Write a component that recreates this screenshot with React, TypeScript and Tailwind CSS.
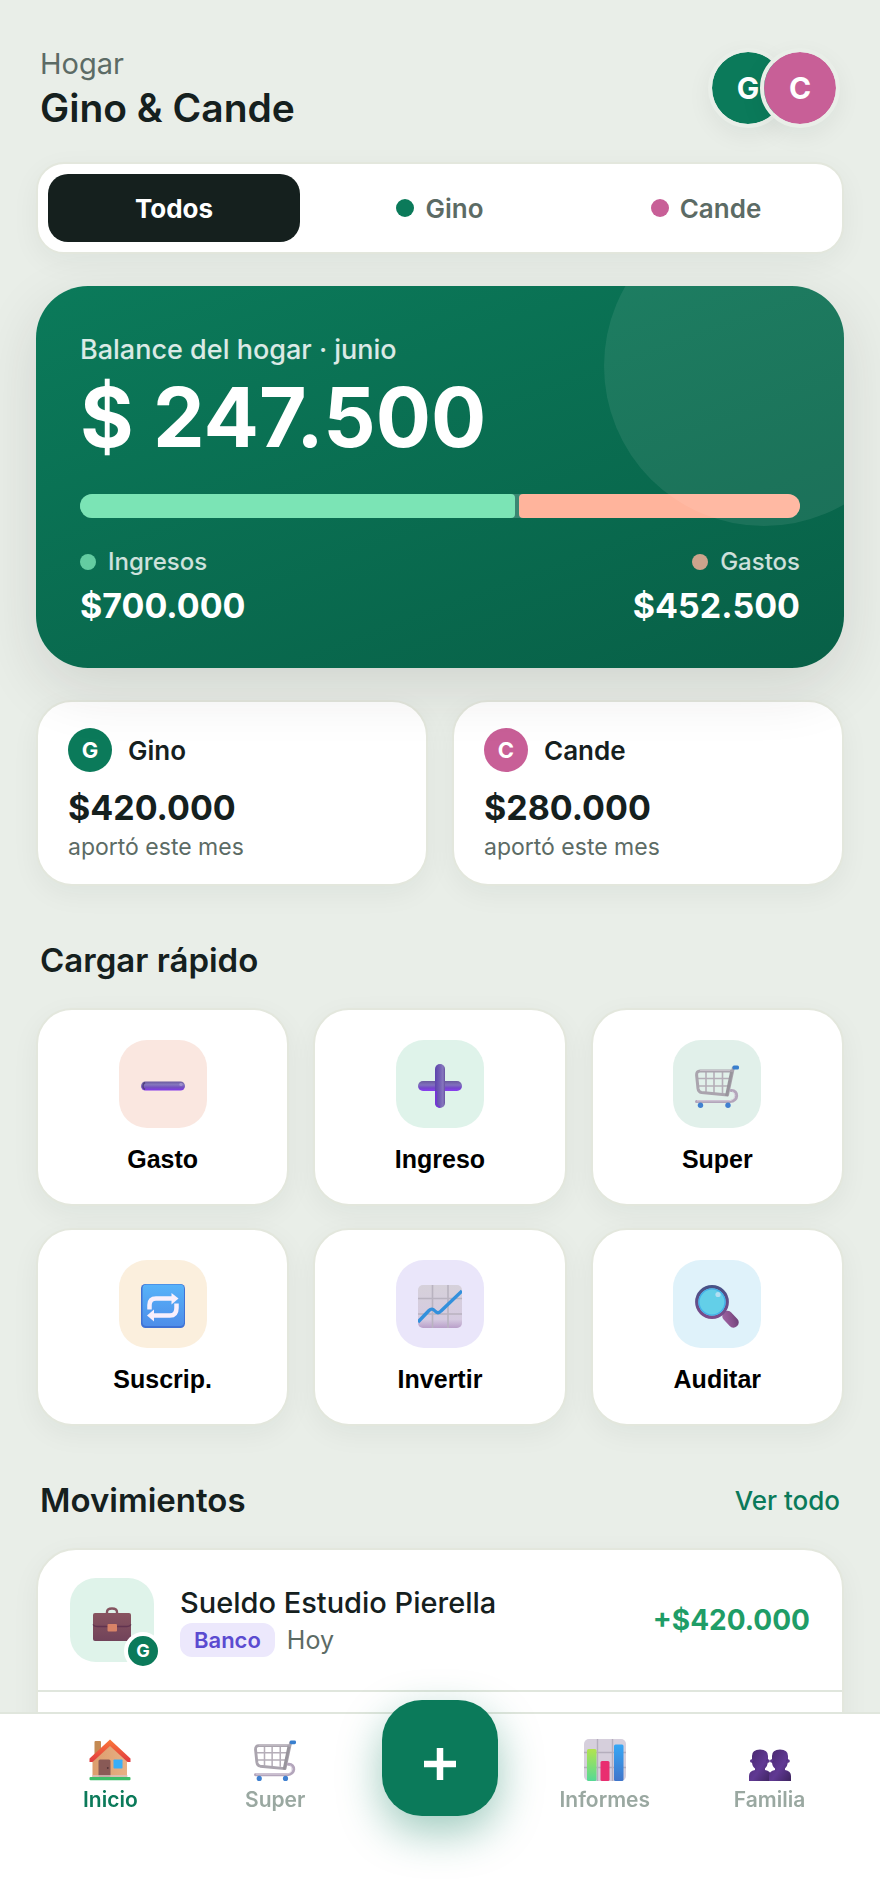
import { useState, type ReactNode } from 'react';

const CARD = 'border-2 border-[#e3e7dd] bg-white shadow-[0_8px_28px_rgba(20,32,30,0.05)]';

function MinusIcon() {
  return (
    <svg viewBox="0 0 44 44" className="h-11 w-11" aria-hidden="true">
      <defs>
        <linearGradient id="minus" x1="0" y1="0" x2="0" y2="1">
          <stop offset="0" stopColor="#6a5a9e" />
          <stop offset="0.35" stopColor="#8577bd" />
          <stop offset="0.65" stopColor="#7350bf" />
          <stop offset="1" stopColor="#8238ea" />
        </linearGradient>
      </defs>
      <rect x="0" y="17.5" width="44" height="9" rx="4.5" fill="url(#minus)" />
      <path d="M4 18.5 A4 4 0 0 0 4 25.5" stroke="#51407f" strokeWidth="1.5" fill="none" />
      <circle cx="40" cy="20.5" r="1.8" fill="#a99bd6" opacity="0.7" />
    </svg>
  );
}

function PlusIcon() {
  return (
    <svg viewBox="0 0 44 44" className="h-11 w-11" aria-hidden="true">
      <defs>
        <linearGradient id="plusH" x1="0" y1="0" x2="0" y2="1">
          <stop offset="0" stopColor="#6a5a9e" />
          <stop offset="0.4" stopColor="#8070bc" />
          <stop offset="0.7" stopColor="#7445cc" />
          <stop offset="1" stopColor="#8a3df2" />
        </linearGradient>
        <linearGradient id="plusV" x1="0" y1="0" x2="1" y2="0">
          <stop offset="0" stopColor="#5d43ad" />
          <stop offset="0.5" stopColor="#7460b5" />
          <stop offset="0.8" stopColor="#8777be" />
          <stop offset="1" stopColor="#65509f" />
        </linearGradient>
      </defs>
      <rect x="0" y="17" width="44" height="10" rx="5" fill="url(#plusH)" />
      <rect x="17" y="0" width="10" height="44" rx="5" fill="url(#plusV)" />
      <path d="M18 27v12a4 4 0 0 0 4 4" stroke="#7a30e0" strokeWidth="2" fill="none" opacity="0.75" />
    </svg>
  );
}

function CartIcon() {
  return (
    <svg viewBox="0 0 44 44" className="h-full w-full" fill="none" aria-hidden="true">
      <g stroke="#b5aeb8" strokeWidth="1.6">
        <path d="M11 7v21M19 7v22M27.5 7v22M2 14.5h33M2 22h31" />
      </g>
      <path
        d="M38.5 3 L32.500 31 L6.500 28.500 Q3.500 28 3 24.500 L1.600 11 Q1.500 7 5 7 H37"
        stroke="#aaa4ae"
        strokeWidth="3"
        strokeLinejoin="round"
      />
      <path d="M36.5 8 L31.5 32" stroke="#98949c" strokeWidth="3" />
      <path d="M5 6.500 H35" stroke="#c7c2ca" strokeWidth="1" />
      <path
        d="M36 26.5 C44 26 43.500 37.500 35 37.500 H1.500"
        stroke="#b3a5bb"
        strokeWidth="3"
        strokeLinecap="round"
      />
      <path d="M2 36.800 H34 C40 36.500 41.500 30 37.500 27.500" stroke="#d9cfdd" strokeWidth="1" />
      <rect x="37.5" y="1.500" width="6.500" height="4" rx="1.500" fill="#397fce" />
      <circle cx="5.500" cy="41.300" r="2.700" fill="#4080d0" />
      <circle cx="33" cy="41.300" r="2.700" fill="#4080d0" />
    </svg>
  );
}

function RepeatIcon() {
  return (
    <svg viewBox="0 0 44 44" className="h-11 w-11" fill="none" aria-hidden="true">
      <defs>
        <linearGradient id="repeat" x1="0" y1="0" x2="0" y2="1">
          <stop offset="0" stopColor="#57b3f9" />
          <stop offset="1" stopColor="#4e8ee9" />
        </linearGradient>
      </defs>
      <rect width="44" height="44" rx="4.5" fill="#3f72d5" />
      <rect x="1.5" y="0.5" width="41.5" height="41.5" rx="4" fill="url(#repeat)" />
      <path d="M8.5 25.5 V21 Q8.500 14.500 15 14.500 H31" stroke="#f8effc" strokeWidth="4.5" />
      <path d="M30.5 9 L37.500 14.500 L30.500 20.500Z" fill="#f8effc" />
      <path d="M35.5 19.500 V24 Q35.500 31.500 29 31.500 H13" stroke="#f8effc" strokeWidth="4.5" />
      <path d="M13 25.500 L6 31.500 L13 37.500Z" fill="#f8effc" />
    </svg>
  );
}

function TrendIcon() {
  return (
    <svg viewBox="0 0 44 44" className="h-11 w-11" fill="none" aria-hidden="true">
      <defs>
        <linearGradient id="trend" x1="0" y1="0" x2="0" y2="1">
          <stop offset="0" stopColor="#d6d1da" />
          <stop offset="0.8" stopColor="#d5cae0" />
          <stop offset="1" stopColor="#b99fc9" />
        </linearGradient>
      </defs>
      <rect y="1" width="44" height="43" rx="5" fill="url(#trend)" />
      <path d="M14.5 1v43M30 1v43M0 14.500h44M0 30h44" stroke="#b9b3c0" strokeWidth="1.6" />
      <path
        d="M0 38 L11 26.500 Q14 23.500 17 27 Q20 30.500 23 27 L44 7"
        stroke="#3390dc"
        strokeWidth="3.4"
        strokeLinejoin="round"
      />
    </svg>
  );
}

function SearchIcon() {
  return (
    <svg viewBox="0 0 44 44" className="h-11 w-11" fill="none" aria-hidden="true">
      <defs>
        <linearGradient id="rim" x1="0" y1="0" x2="0" y2="1">
          <stop offset="0" stopColor="#475287" />
          <stop offset="1" stopColor="#7c4b8b" />
        </linearGradient>
        <linearGradient id="handle" x1="0" y1="1" x2="1" y2="0">
          <stop offset="0" stopColor="#a265a5" />
          <stop offset="0.6" stopColor="#85508a" />
          <stop offset="1" stopColor="#663d71" />
        </linearGradient>
      </defs>
      <path d="M26 26 L31 31" stroke="#67406f" strokeWidth="4" />
      <rect x="26" y="30" width="19" height="10.5" rx="5" transform="rotate(47 35.5 35.25)" fill="url(#handle)" />
      <circle cx="17" cy="18" r="15.3" fill="#63cfe8" stroke="url(#rim)" strokeWidth="3.2" />
      <circle cx="17" cy="18" r="13" stroke="#42adea" strokeWidth="1.2" />
      <circle cx="23" cy="10.5" r="2.6" fill="#b3dff2" />
    </svg>
  );
}

function BriefcaseIcon() {
  return (
    <svg viewBox="0 0 40 36" className="h-9 w-10" fill="none" aria-hidden="true">
      <defs>
        <linearGradient id="bag" x1="0" y1="0" x2="0" y2="1">
          <stop offset="0" stopColor="#885460" />
          <stop offset="1" stopColor="#71435a" />
        </linearGradient>
      </defs>
      <path d="M15 8 V6 Q15 2.500 20 2.500 Q25 2.500 25 6 V8" stroke="#855460" strokeWidth="2.4" />
      <rect x="1" y="7" width="38" height="28" rx="2" fill="url(#bag)" />
      <path d="M1 18.5 Q2 20.500 5 20.500 H35 Q38 20.500 39 18.500" stroke="#61334f" strokeWidth="1.3" />
      <rect x="15.5" y="18" width="9.5" height="7.5" rx="1" fill="#d88367" />
    </svg>
  );
}

function HouseIcon() {
  return (
    <svg viewBox="0 0 42 42" className="h-full w-full" fill="none" aria-hidden="true">
      <defs>
        <linearGradient id="wall" x1="0" y1="0" x2="1" y2="0">
          <stop offset="0" stopColor="#dc9d6d" />
          <stop offset="1" stopColor="#e7b084" />
        </linearGradient>
        <linearGradient id="roof" x1="0" y1="0" x2="0" y2="1">
          <stop offset="0" stopColor="#fb7838" />
          <stop offset="1" stopColor="#e03a40" />
        </linearGradient>
      </defs>
      <rect x="5.5" y="2" width="6.5" height="15" rx="1" fill="#c48a53" />
      <path d="M21 6 L38 22 V39 H3.500 V22Z" fill="url(#wall)" />
      <path d="M0.5 19.500 L21 0.500 L41.500 19.500 V23 L38.500 23 L21 7 L3.500 23 L0.500 23Z" fill="url(#roof)" />
      <rect x="9.5" y="20.5" width="12" height="17.5" rx="1.5" fill="#895a56" />
      <circle cx="18.8" cy="29" r="0.9" fill="#553438" />
      <rect x="24.5" y="20.5" width="9" height="9" rx="0.8" fill="#38aef7" />
      <path d="M3 37 H38.500" stroke="#d7c5c2" strokeWidth="1.5" />
      <rect x="0.5" y="38" width="41" height="3.2" rx="1" fill="#3dbd68" />
    </svg>
  );
}

function ChartIcon() {
  return (
    <svg viewBox="0 0 42 42" className="h-full w-full" fill="none" aria-hidden="true">
      <defs>
        <linearGradient id="lime" x1="0" y1="0" x2="0" y2="1">
          <stop offset="0" stopColor="#b2e34f" />
          <stop offset="1" stopColor="#55d995" />
        </linearGradient>
        <linearGradient id="azure" x1="0" y1="0" x2="0" y2="1">
          <stop offset="0" stopColor="#37a7f5" />
          <stop offset="1" stopColor="#4075ca" />
        </linearGradient>
      </defs>
      <rect width="42" height="42" rx="5" fill="#d6cfdc" />
      <path d="M13.5 0v42M28.5 0v42M0 13.500h42M0 28.500h42" stroke="#b5aebd" strokeWidth="1.4" />
      <rect x="3" y="10" width="9.5" height="32" rx="1.5" fill="url(#lime)" />
      <rect x="16.5" y="22" width="9" height="20" rx="1.5" fill="#e92e70" />
      <rect x="30" y="5.5" width="9.5" height="36.5" rx="1.5" fill="url(#azure)" />
    </svg>
  );
}

function PeopleIcon() {
  return (
    <svg viewBox="0 0 42 42" className="h-full w-full" aria-hidden="true">
      <defs>
        <linearGradient id="person" x1="0" y1="0" x2="1" y2="1">
          <stop offset="0" stopColor="#47276c" />
          <stop offset="0.55" stopColor="#603993" />
          <stop offset="1" stopColor="#3d235e" />
        </linearGradient>
      </defs>
      {[0, 20].map((x) => (
        <g key={x} transform={`translate(${x} 10)`} fill="url(#person)">
          <path d="M3 7 Q3 0.500 11 0.500 Q19 0.500 19 7 V13 Q18.500 17 16 19.500 V21 Q22 22 22 27 V32 H0 V27 Q0 22 6 21 V19.500 Q3 17 3 13Z" />
          <circle cx="2.8" cy="12" r="1.8" />
          <circle cx="19" cy="12" r="1.8" />
        </g>
      ))}
    </svg>
  );
}

const people = [
  { name: 'Gino', initial: 'G', color: 'bg-[#0b7a5a]', amount: '$420.000' },
  { name: 'Cande', initial: 'C', color: 'bg-[#c85f97]', amount: '$280.000' },
];

const actions = [
  { label: 'Gasto', tint: 'bg-[#fae7e0]', icon: <MinusIcon /> },
  { label: 'Ingreso', tint: 'bg-[#dff3ea]', icon: <PlusIcon /> },
  { label: 'Super', tint: 'bg-[#e1f0ea]', icon: <CartIcon /> },
  { label: 'Suscrip.', tint: 'bg-[#fbefdd]', icon: <RepeatIcon /> },
  { label: 'Invertir', tint: 'bg-[#eae6fa]', icon: <TrendIcon /> },
  { label: 'Auditar', tint: 'bg-[#dff2fa]', icon: <SearchIcon /> },
];

function NavItem({ label, active, children }: { label: string; active?: boolean; children: ReactNode }) {
  return (
    <a
      href="#"
      className={`flex flex-col items-center gap-0.5 text-[21px] leading-8 font-semibold ${
        active ? 'text-[#0b7a5a]' : 'text-[#9aa8a1]'
      }`}
    >
      <span className="h-11 w-11 p-px">{children}</span>
      {label}
    </a>
  );
}

export default function App() {
  const [filter, setFilter] = useState('Todos');
  const income = 700000;
  const expenses = 452500;

  return (
    <div className="flex min-h-screen flex-col bg-[#e9eee8] px-9 pt-11 font-['Inter',sans-serif] text-[#15201e]">
      <header className="flex items-center justify-between px-1">
        <div>
          <p className="text-[29px] leading-10 text-[#5c6b65]">Hogar</p>
          <h1 className="text-[39px] leading-12 font-semibold">Gino &amp; Cande</h1>
        </div>
        <div className="flex -space-x-7">
          {people.map((p) => (
            <div
              key={p.name}
              className={`flex h-20 w-20 items-center justify-center rounded-full border-4 border-[#e9eee8] bg-clip-padding text-[30px] font-bold text-white shadow-[0_8px_24px_rgba(20,32,30,0.06)] ${p.color}`}
            >
              {p.initial}
            </div>
          ))}
        </div>
      </header>

      <div className={`mt-[30px] grid grid-cols-3 gap-3.5 rounded-[28px] p-2.5 ${CARD}`}>
        <button
          onClick={() => setFilter('Todos')}
          className={`h-17 rounded-[20px] text-[26px] font-bold ${
            filter === 'Todos' ? 'bg-[#15201e] text-white' : 'text-[#5c6b65]'
          }`}
        >
          Todos
        </button>
        {people.map((p) => (
          <button
            key={p.name}
            onClick={() => setFilter(p.name)}
            className={`flex h-17 items-center justify-center gap-[11px] rounded-[20px] text-[26px] font-semibold ${
              filter === p.name ? 'bg-[#15201e] text-white' : 'text-[#5c6b65]'
            }`}
          >
            <span className={`h-[18px] w-[18px] rounded-full ${p.color}`} />
            {p.name}
          </button>
        ))}
      </div>

      <section className="relative mt-8 overflow-hidden rounded-[52px] bg-linear-160 from-[#0b7a5a] to-[#086047] px-11 pt-11 pb-[38px] text-white shadow-[0_20px_60px_rgba(40,30,30,0.12)]">
        <p className="text-[27px] leading-10 font-medium text-white/85">Balance del hogar · junio</p>
        <p className="text-[82px] leading-24 font-bold">$ 247.500</p>
        <div className="mt-7 flex h-6 gap-1 overflow-hidden rounded-full bg-white/20">
          <div className="rounded-r bg-[#7be4b5]" style={{ flexGrow: income }} />
          <div className="rounded-l bg-[#ffb49c]" style={{ flexGrow: expenses }} />
        </div>
        <div className="mt-6 flex justify-between">
          <div>
            <p className="flex items-center gap-3 text-2xl leading-10 font-medium text-white/80">
              <span className="h-4 w-4 rounded-full bg-[#7be4b5]/80" />
              Ingresos
            </p>
            <p className="text-[34px] leading-12 font-bold">$700.000</p>
          </div>
          <div className="text-right">
            <p className="flex items-center justify-end gap-3 text-2xl leading-10 font-medium text-white/80">
              <span className="h-4 w-4 rounded-full bg-[#ffb49c]/80" />
              Gastos
            </p>
            <p className="text-[34px] leading-12 font-bold">$452.500</p>
          </div>
        </div>
        <div className="pointer-events-none absolute -top-20 -right-20 h-80 w-80 rounded-full bg-white/8" />
      </section>

      <section className="mt-8 grid grid-cols-2 gap-6">
        {people.map((p) => (
          <div key={p.name} className={`rounded-[36px] px-[30px] pt-[26px] pb-[22px] ${CARD}`}>
            <div className="flex items-center gap-4">
              <span
                className={`flex h-11 w-11 items-center justify-center rounded-full text-[22px] font-bold text-white ${p.color}`}
              >
                {p.initial}
              </span>
              <span className="text-[26px] font-semibold">{p.name}</span>
            </div>
            <p className="mt-3 text-[34px] leading-12 font-bold">{p.amount}</p>
            <p className="text-[23px] leading-[30px] text-[#5c6b65]">aportó este mes</p>
          </div>
        ))}
      </section>

      <h2 className="mt-[50px] px-1 text-[33px] leading-12 font-semibold">Cargar rápido</h2>
      <section className="mt-6 grid grid-cols-3 gap-x-6 gap-y-[22px]">
        {actions.map((a) => (
          <button key={a.label} className={`flex flex-col items-center rounded-[36px] pt-[30px] pb-[30px] ${CARD}`}>
            <span className={`flex h-22 w-22 items-center justify-center rounded-[28px] ${a.tint}`}>
              <span className="mt-1 h-11 w-11">{a.icon}</span>
            </span>
            <span className="mt-4 font-['Liberation_Sans',sans-serif] text-[25px] leading-[30px] font-bold text-black">
              {a.label}
            </span>
          </button>
        ))}
      </section>

      <div className="mt-[50px] flex items-center justify-between px-1">
        <h2 className="text-[33px] leading-12 font-semibold">Movimientos</h2>
        <a href="#" className="text-[26px] font-medium text-[#0b7a5a]">
          Ver todo
        </a>
      </div>
      <section className={`mt-6 flex-1 rounded-t-[40px] pb-42 ${CARD}`}>
        <div className="flex items-center border-b-2 border-[#e0e6dd] px-8 py-7">
          <div className="relative flex h-21 w-21 items-center justify-center rounded-[26px] bg-[#dff3ea] pt-2">
            <BriefcaseIcon />
            <span className="absolute -right-2 -bottom-2 flex h-[38px] w-[38px] items-center justify-center rounded-full border-4 border-white bg-[#0b7a5a] text-lg font-bold text-white">
              G
            </span>
          </div>
          <div className="ml-[26px] flex-1">
            <p className="text-[29px] leading-10 font-medium">Sueldo Estudio Pierella</p>
            <div className="flex items-center gap-3">
              <span className="rounded-xl bg-[#ece8fc] px-3.5 text-[22px] leading-[34px] font-semibold text-[#5b4bd0]">
                Banco
              </span>
              <span className="text-[25px] leading-[34px] text-[#5c6b65]">Hoy</span>
            </div>
          </div>
          <span className="text-[28px] font-bold text-[#1f9d67]">+$420.000</span>
        </div>
      </section>

      <nav className="fixed inset-x-0 bottom-0 grid h-42 grid-cols-5 items-start border-t-2 border-[#e0e6dd] bg-white/98 px-7 pt-6">
        <NavItem label="Inicio" active>
          <HouseIcon />
        </NavItem>
        <NavItem label="Super">
          <CartIcon />
        </NavItem>
        <button
          aria-label="Cargar"
          className="-mt-[38px] flex h-29 w-29 items-center justify-center justify-self-center rounded-[40px] bg-[#0b7a5a] text-white shadow-[0_16px_44px_rgba(11,122,90,0.4)]"
        >
          <svg viewBox="0 0 32 32" className="mt-3 h-8 w-8" stroke="currentColor" strokeWidth="6.5" aria-hidden="true">
            <path d="M16 0v32M0 16h32" />
          </svg>
        </button>
        <NavItem label="Informes">
          <ChartIcon />
        </NavItem>
        <NavItem label="Familia">
          <PeopleIcon />
        </NavItem>
      </nav>
    </div>
  );
}
